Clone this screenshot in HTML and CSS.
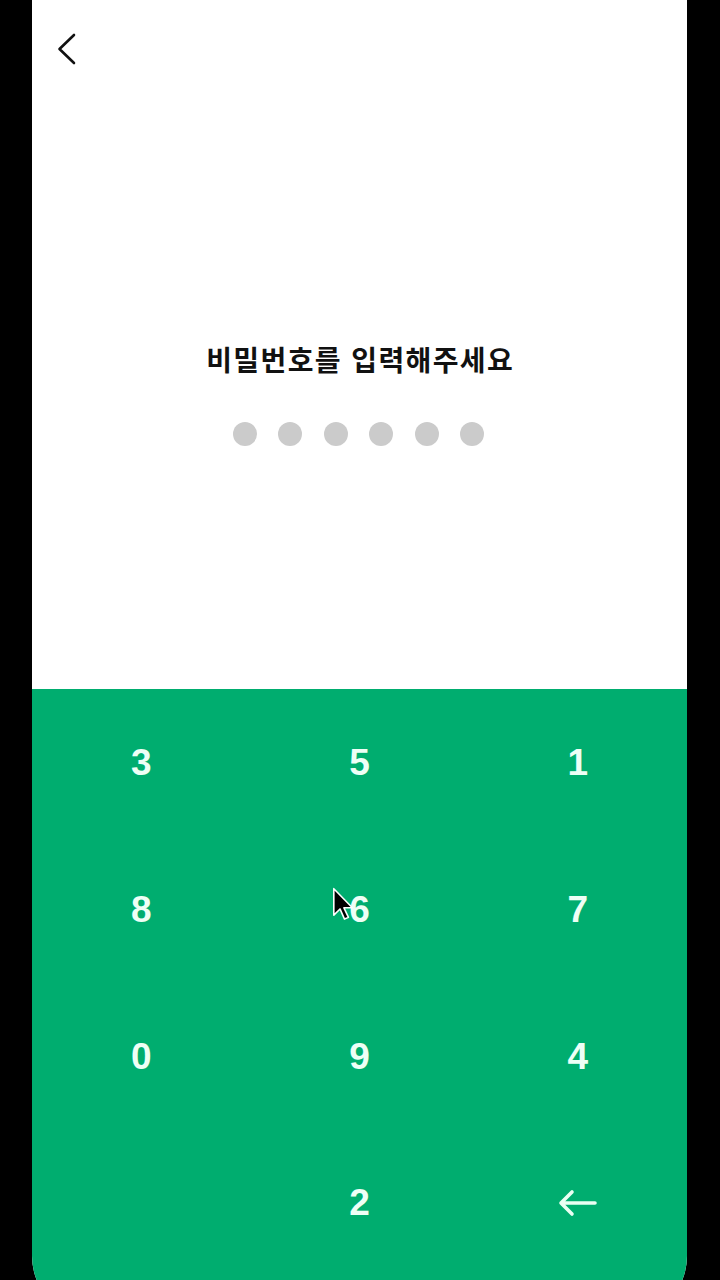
FILE: index.html
```html
<!DOCTYPE html>
<html lang="ko">
<head>
<meta charset="utf-8">
<title>비밀번호 입력</title>
<link rel="stylesheet" href="styles.css">
</head>
<body>
<div class="screen">
  <section class="top">
    <header class="header">
      <button class="back" aria-label="뒤로">
        <svg width="40" height="40" viewBox="0 0 40 40"><path d="M22 6 L7.5 20 L22 34" fill="none" stroke="#111" stroke-width="2.6" stroke-linecap="round" stroke-linejoin="round"/></svg>
      </button>
    </header>
    <h1 class="title">비밀번호를 입력해주세요</h1>
    <div class="dots">
      <span class="dot"></span><span class="dot"></span><span class="dot"></span><span class="dot"></span><span class="dot"></span><span class="dot"></span>
    </div>
  </section>
  <section class="keypad">
    <button class="key">3</button>
    <button class="key">5</button>
    <button class="key">1</button>
    <button class="key">8</button>
    <button class="key">6</button>
    <button class="key">7</button>
    <button class="key">0</button>
    <button class="key">9</button>
    <button class="key">4</button>
    <span class="key empty"></span>
    <button class="key">2</button>
    <button class="key" aria-label="지우기">
      <svg width="40" height="28" viewBox="0 0 40 28"><path d="M3 14 H37 M14 3 L3 14 L14 25" fill="none" stroke="#eafff3" stroke-width="3.6" stroke-linecap="round" stroke-linejoin="round"/></svg>
    </button>
  </section>
</div>
<svg class="cursor" width="25" height="36" viewBox="0 0 22 32"><path d="M1.5 1.5 L1.5 25 L7 19.5 L11 28.5 L14.5 27 L10.5 18.5 L18 18.5 Z" fill="#000" stroke="#fff" stroke-width="1.4" stroke-linejoin="round"/></svg>
</body>
</html>
```
FILE: styles.css
```css
html, body {
  margin: 0;
  padding: 0;
  background: #000;
  overflow: hidden;
  height: 1280px;
}
body {
  position: relative;
  font-family: "Noto Sans CJK KR", "Noto Sans", sans-serif;
}
.screen {
  margin-left: 32px;
  width: 655px;
  height: 1320px;
  background: #fff;
  border-radius: 0 0 64px 64px;
  overflow: hidden;
  display: flex;
  flex-direction: column;
}
.top {
  height: 689px;
  display: flex;
  flex-direction: column;
  align-items: center;
  flex-shrink: 0;
}
.header {
  align-self: stretch;
  height: 98px;
  display: flex;
  align-items: center;
  padding-left: 20px;
}
.back {
  border: 0;
  background: none;
  padding: 0;
  width: 40px;
  height: 40px;
  display: block;
}
.back svg { display: block; }
.title {
  margin: 243px 0 0;
  font-size: 28px;
  line-height: 36px;
  font-weight: 700;
  color: #111;
  letter-spacing: 1.4px;
  text-indent: 1.4px;
}
.dots {
  margin-top: 45px;
  display: flex;
  gap: 21.4px;
  margin-left: -2px;
}
.dot {
  width: 24px;
  height: 24px;
  border-radius: 50%;
  background: #cbcbcb;
}
.keypad {
  flex: 1;
  background: #00ad6f;
  display: grid;
  grid-template-columns: repeat(3, 1fr);
  grid-template-rows: repeat(4, 146.67px);
  align-content: start;
}
.key {
  border: 0;
  background: none;
  padding: 0;
  padding-top: 2px;
  display: flex;
  align-items: center;
  justify-content: center;
  font-family: "Liberation Sans", Arial, sans-serif;
  font-weight: 700;
  font-size: 37px;
  color: #eefff6;
}
.key svg { display: block; }
.cursor {
  position: absolute;
  left: 332px;
  top: 887px;
}
```
